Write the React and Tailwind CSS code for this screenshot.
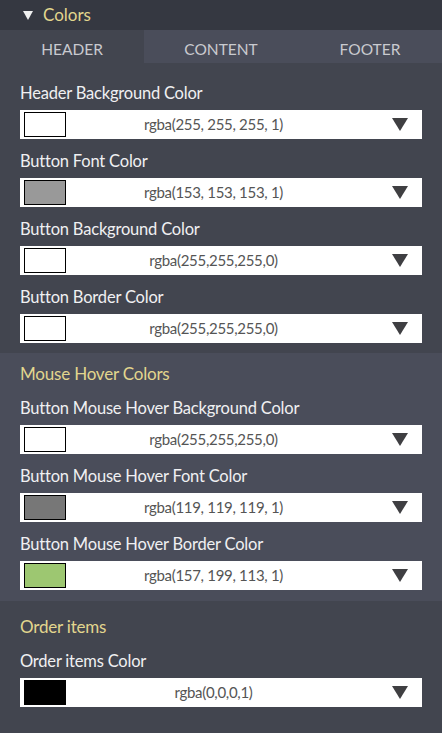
const font = { fontFamily: 'Lato, "Open Sans", sans-serif' };

const Swatch = ({ color }) => (
    <div className="w-[42px] h-[25px] border border-black ml-[4px] col-start-1 row-start-1 justify-self-start" style={{ backgroundColor: color }} />
);

const ColorField = ({ label, value, color }) => (
    <div className="pt-[11px]">
        <div className="h-[22px] leading-[22px] text-[16.5px] text-[#f0f0f2] mb-[6px] tracking-[-0.2px]">{label}</div>
        <div className="h-[29px] bg-white grid items-center">
            <Swatch color={color} />
            <div className="col-start-1 row-start-1 text-center pr-[15px] text-[15px] text-[#555] tracking-[-0.3px]">{value}</div>
            <svg className="col-start-1 row-start-1 justify-self-end mr-[14px]" width="16" height="13" viewBox="0 0 16 13">
                <path d="M0 0 H16 L8 13 Z" fill="#3f3f42" />
            </svg>
        </div>
    </div>
);

const SectionTitle = ({ children }) => (
    <div className="h-[24px] leading-[24px] text-[17px] text-[#e2d68e] tracking-[-0.2px]">{children}</div>
);

export default function App() {
    return (
        <div className="w-[442px] min-h-[733px] bg-[#42454f]" style={font}>
            {/* top bar */}
            <div className="h-[30px] bg-[#353841] flex items-center pl-[23px]">
                <svg width="10" height="9" viewBox="0 0 10 9" className="mr-[10px]">
                    <path d="M0 0 H10 L5 9 Z" fill="#f0f0f0" />
                </svg>
                <span className="text-[17px] text-[#e2d68e]">Colors</span>
            </div>

            {/* tabs */}
            <div className="h-[33px] flex text-[15.5px] text-[#c9cacf]">
                <div className="w-[144px] bg-[#42454f] flex items-center justify-center pt-[6px]">HEADER</div>
                <div className="w-[154px] bg-[#4a4d5a] flex items-center justify-center pt-[6px]">CONTENT</div>
                <div className="flex-1 bg-[#4a4d5a] flex items-center justify-center pt-[6px]">FOOTER</div>
            </div>

            {/* header colors */}
            <div className="bg-[#42454f] px-[20px] pt-[8px] pb-[10px]">
                <ColorField label="Header Background Color" value="rgba(255, 255, 255, 1)" color="#ffffff" />
                <ColorField label="Button Font Color" value="rgba(153, 153, 153, 1)" color="#999999" />
                <ColorField label="Button Background Color" value="rgba(255,255,255,0)" color="#ffffff" />
                <ColorField label="Button Border Color" value="rgba(255,255,255,0)" color="#ffffff" />
            </div>

            {/* hover */}
            <div className="bg-[#4a4d5a] px-[20px] pt-[9px] pb-[11px]">
                <SectionTitle>Mouse Hover Colors</SectionTitle>
                <ColorField label="Button Mouse Hover Background Color" value="rgba(255,255,255,0)" color="#ffffff" />
                <ColorField label="Button Mouse Hover Font Color" value="rgba(119, 119, 119, 1)" color="#777777" />
                <ColorField label="Button Mouse Hover Border Color" value="rgba(157, 199, 113, 1)" color="#9dc771" />
            </div>

            {/* order items */}
            <div className="bg-[#42454f] px-[20px] pt-[14px] pb-[26px]">
                <SectionTitle>Order items</SectionTitle>
                <ColorField label="Order items Color" value="rgba(0,0,0,1)" color="#000000" />
            </div>
        </div>
    );
}
